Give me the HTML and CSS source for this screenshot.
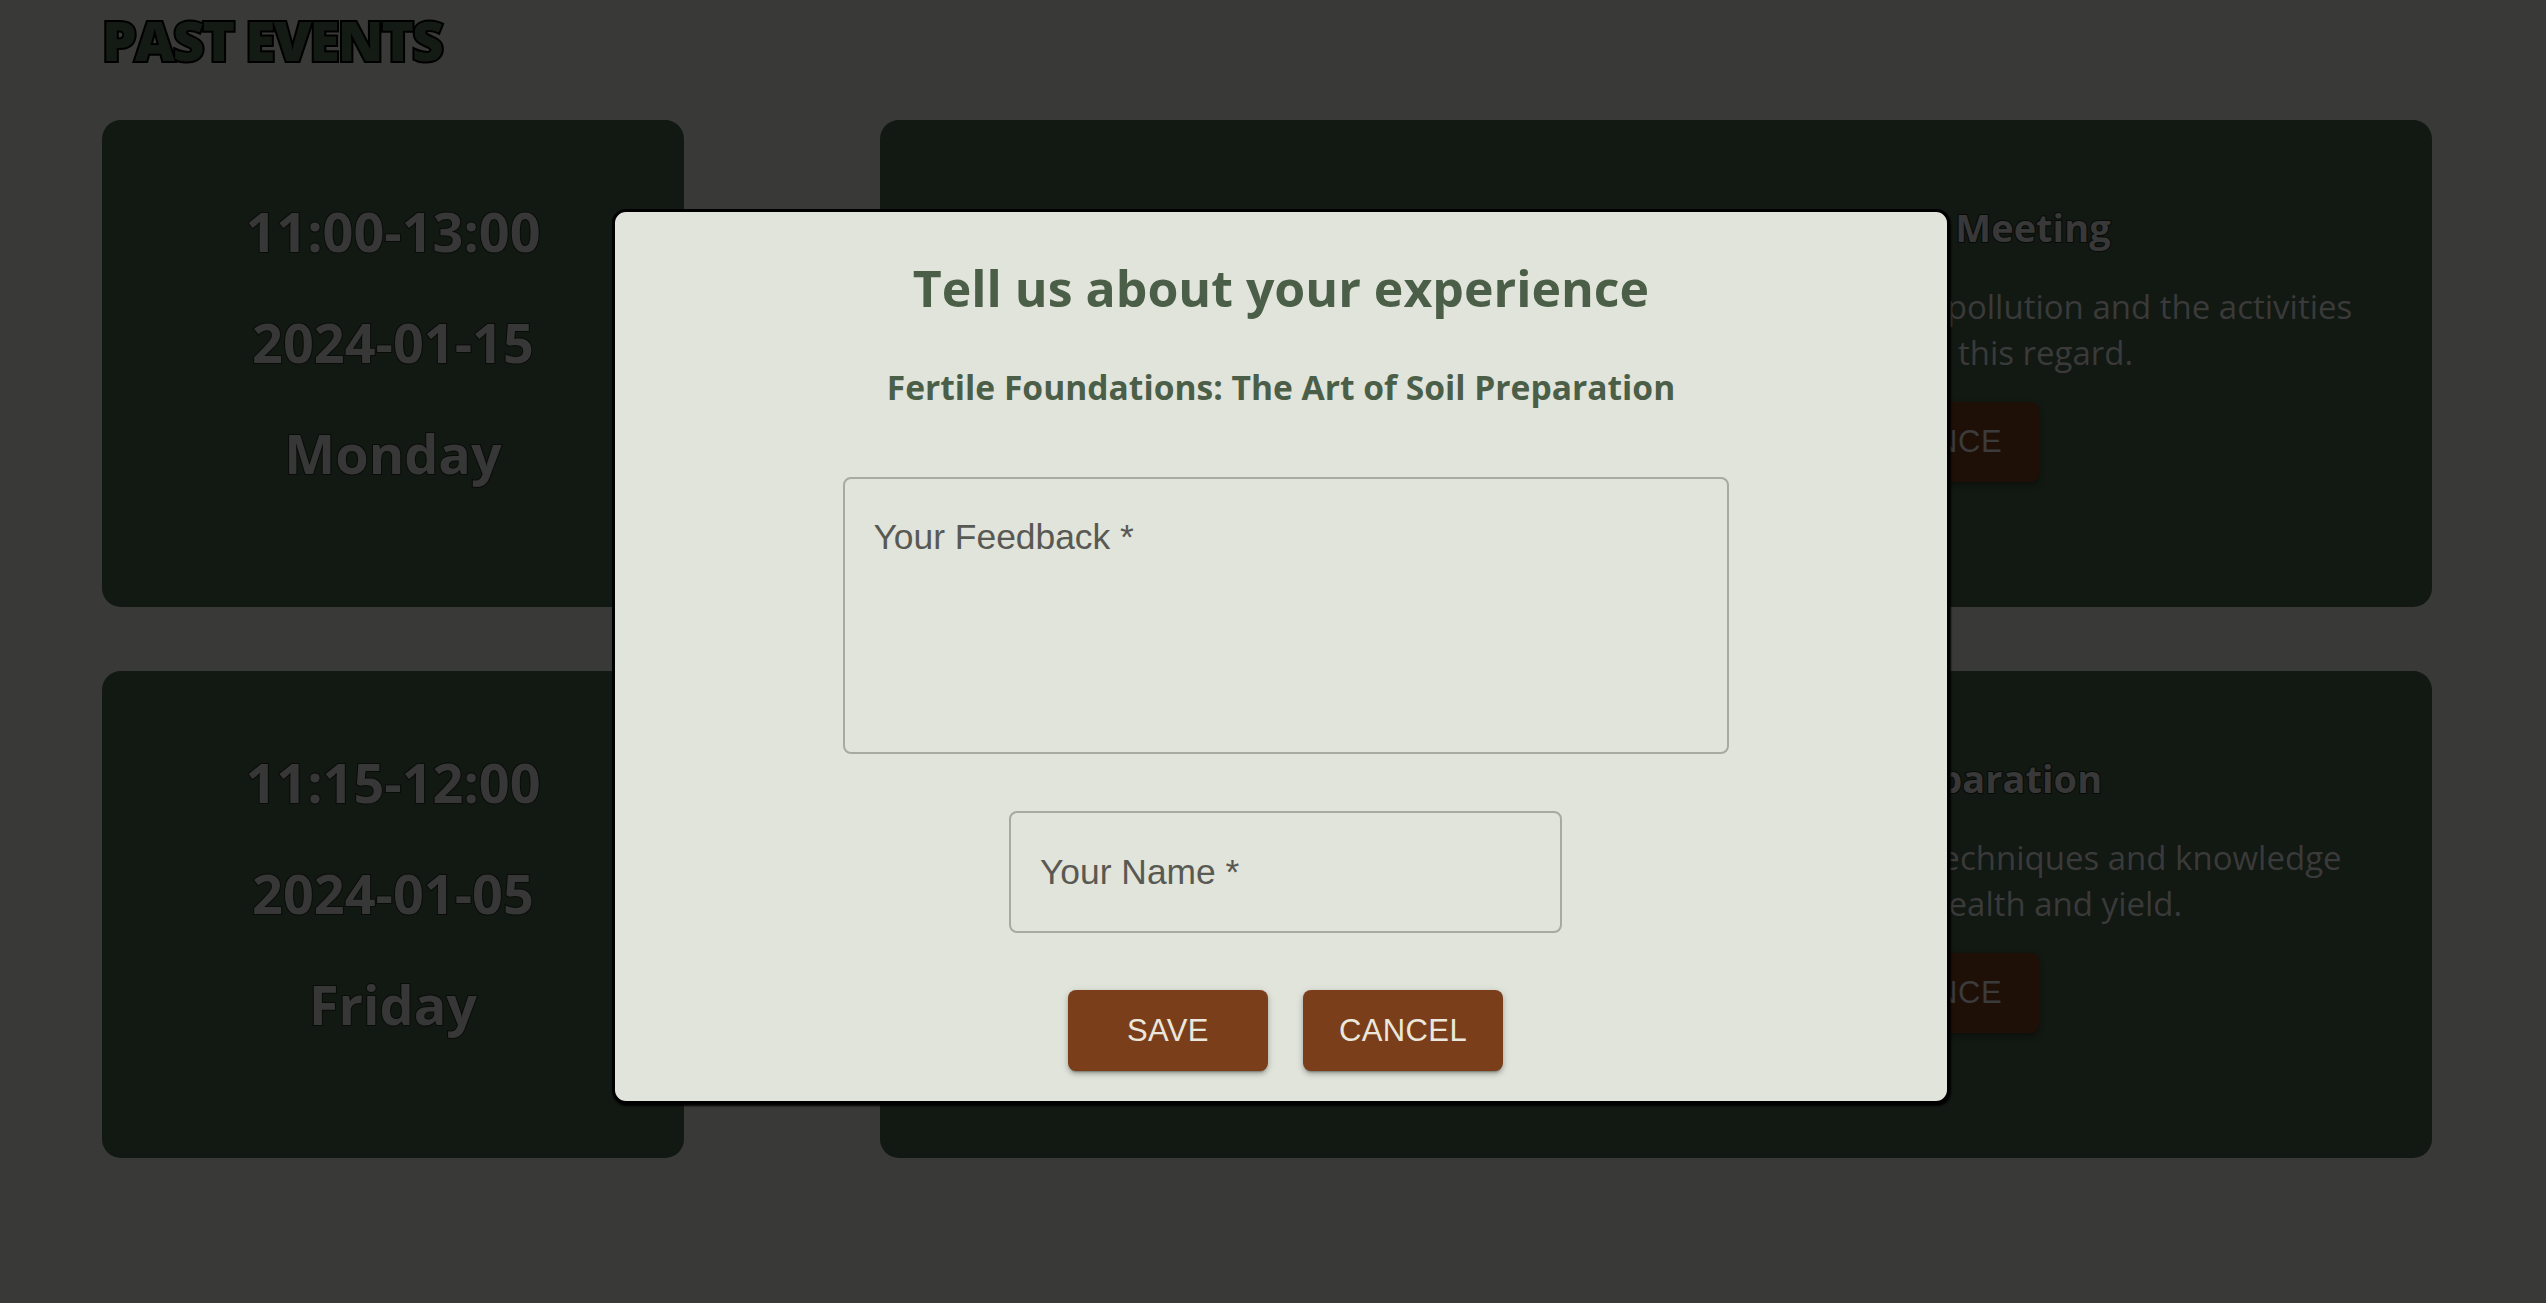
FILE: index.html
```html
<!DOCTYPE html>
<html lang="en">
<head>
<meta charset="utf-8">
<title>Past Events</title>
<link rel="stylesheet" href="styles.css">
</head>
<body>
<main class="page">
  <h1 class="page-title">PAST EVENTS</h1>
  <section class="events">
    <article class="when-card">
      <p class="when-line">11:00-13:00</p>
      <p class="when-line">2024-01-15</p>
      <p class="when-line">Monday</p>
    </article>
    <article class="info-card">
      <h2 class="info-title">Environmental Pollution and Education Meeting</h2>
      <p class="info-text">Join us for an open discussion about the roots of environmental pollution and the activities<br>carried out by members of our local community in this regard.</p>
      <button class="info-button" type="button">PLEASE TELL US ABOUT YOUR EXPERIENCE</button>
    </article>
    <article class="when-card">
      <p class="when-line">11:15-12:00</p>
      <p class="when-line">2024-01-05</p>
      <p class="when-line">Friday</p>
    </article>
    <article class="info-card">
      <h2 class="info-title">Fertile Foundations: The Art of Soil Preparation</h2>
      <p class="info-text">In this hands-on workshop, discover essential soil preparation techniques and knowledge<br>that will help you improve your garden's overall soil health and yield.</p>
      <button class="info-button" type="button">PLEASE TELL US ABOUT YOUR EXPERIENCE</button>
    </article>
  </section>
</main>

<div class="modal" role="dialog" aria-labelledby="modal-title">
  <h2 class="modal-title" id="modal-title">Tell us about your experience</h2>
  <h3 class="modal-subtitle">Fertile Foundations: The Art of Soil Preparation</h3>
  <form class="modal-form">
    <textarea class="field field-feedback" placeholder="Your Feedback *"></textarea>
    <input class="field field-name" type="text" placeholder="Your Name *">
    <div class="actions">
      <button class="action-button" type="button">SAVE</button>
      <button class="action-button" type="button">CANCEL</button>
    </div>
  </form>
</div>
</body>
</html>
```

FILE: styles.css
```css
html, body {
  margin: 0;
  padding: 0;
  background: #393937;
  height: 100%;
  overflow: hidden;
}

body {
  font-family: "Open Sans", "Noto Sans", sans-serif;
}

.page {
  padding: 12px 114px 0 102px;
}

.page-title {
  margin: 0 0 53px 0;
  font-size: 55px;
  line-height: 55px;
  font-weight: 800;
  letter-spacing: -2px;
  color: #141a14;
  -webkit-text-stroke: 4px #000;
  paint-order: stroke fill;
}

.events {
  display: grid;
  grid-template-columns: 582px 1552px;
  grid-auto-rows: 487px;
  column-gap: 196px;
  row-gap: 64px;
}

.when-card {
  background: #121812;
  border-radius: 19px;
  display: flex;
  flex-direction: column;
  align-items: center;
  gap: 57px;
  padding-top: 84px;
  box-sizing: border-box;
}

.when-line {
  margin: 0;
  font-size: 54px;
  line-height: 54px;
  font-weight: 700;
  color: #373737;
  -webkit-text-stroke: 2px #0a0c0a;
  paint-order: stroke fill;
}

.info-card {
  background: #121812;
  border-radius: 19px;
  display: flex;
  flex-direction: column;
  align-items: center;
  text-align: center;
  padding: 84px 40px 0;
  box-sizing: border-box;
}

.info-title {
  margin: 0;
  font-size: 38px;
  line-height: 46px;
  font-weight: 700;
  white-space: nowrap;
  color: #383838;
  -webkit-text-stroke: 2px #080a08;
  paint-order: stroke fill;
}

.info-text {
  margin: 34px 0 0;
  font-size: 33px;
  line-height: 46px;
  white-space: nowrap;
  color: #3a3a3a;
}

.info-button {
  margin-top: 26px;
  height: 80px;
  padding: 0 37px;
  border: none;
  border-radius: 8px;
  background: #1e0f07;
  color: #3b3b3b;
  font-family: "Liberation Sans", Arial, sans-serif;
  font-size: 31px;
  letter-spacing: 0.55px;
  box-shadow: 0 3px 6px rgba(0, 0, 0, 0.35);
}

.modal {
  position: absolute;
  left: 612px;
  top: 209px;
  width: 1338px;
  box-sizing: border-box;
  background: #e1e4da;
  border: 3px solid #000;
  border-radius: 14px;
  box-shadow: 1px 2px 2px rgba(0, 0, 0, 0.95);
  padding: 46px 0 30px;
  display: flex;
  flex-direction: column;
  align-items: center;
}

.modal-title {
  margin: 0;
  font-size: 50px;
  line-height: 60px;
  font-weight: 700;
  color: #4b5e48;
}

.modal-subtitle {
  margin: 49px 0 0;
  font-size: 33.6px;
  line-height: 40px;
  font-weight: 700;
  color: #4b5e48;
}

.modal-form {
  margin-top: 70px;
  padding-left: 9px;
  display: flex;
  flex-direction: column;
  align-items: center;
}

.field {
  box-sizing: border-box;
  background: transparent;
  border: 2px solid #a8aaa2;
  border-radius: 8px;
  font-family: "Liberation Sans", Arial, sans-serif;
  font-size: 35.4px;
  line-height: 40px;
  color: #3a3a36;
  outline: none;
  margin: 0;
}

.field::placeholder {
  color: #595954;
  opacity: 1;
}

.field-feedback {
  width: 886px;
  height: 277px;
  padding: 38px 29px;
  resize: none;
  display: block;
}

.field-name {
  margin-top: 57px;
  width: 553px;
  height: 122px;
  padding: 0 29px;
}

.actions {
  margin-top: 57px;
  display: flex;
  gap: 35px;
}

.action-button {
  min-width: 200px;
  height: 81px;
  padding: 0 36px;
  border: none;
  border-radius: 8px;
  background: #7a3e1b;
  color: #ebe7dc;
  font-family: "Liberation Sans", Arial, sans-serif;
  font-size: 31px;
  letter-spacing: 0.4px;
  box-shadow: 0 3px 2px -2px rgba(0, 0, 0, 0.3), 0 3px 4px rgba(0, 0, 0, 0.18), 0 2px 8px rgba(0, 0, 0, 0.14);
}
```
